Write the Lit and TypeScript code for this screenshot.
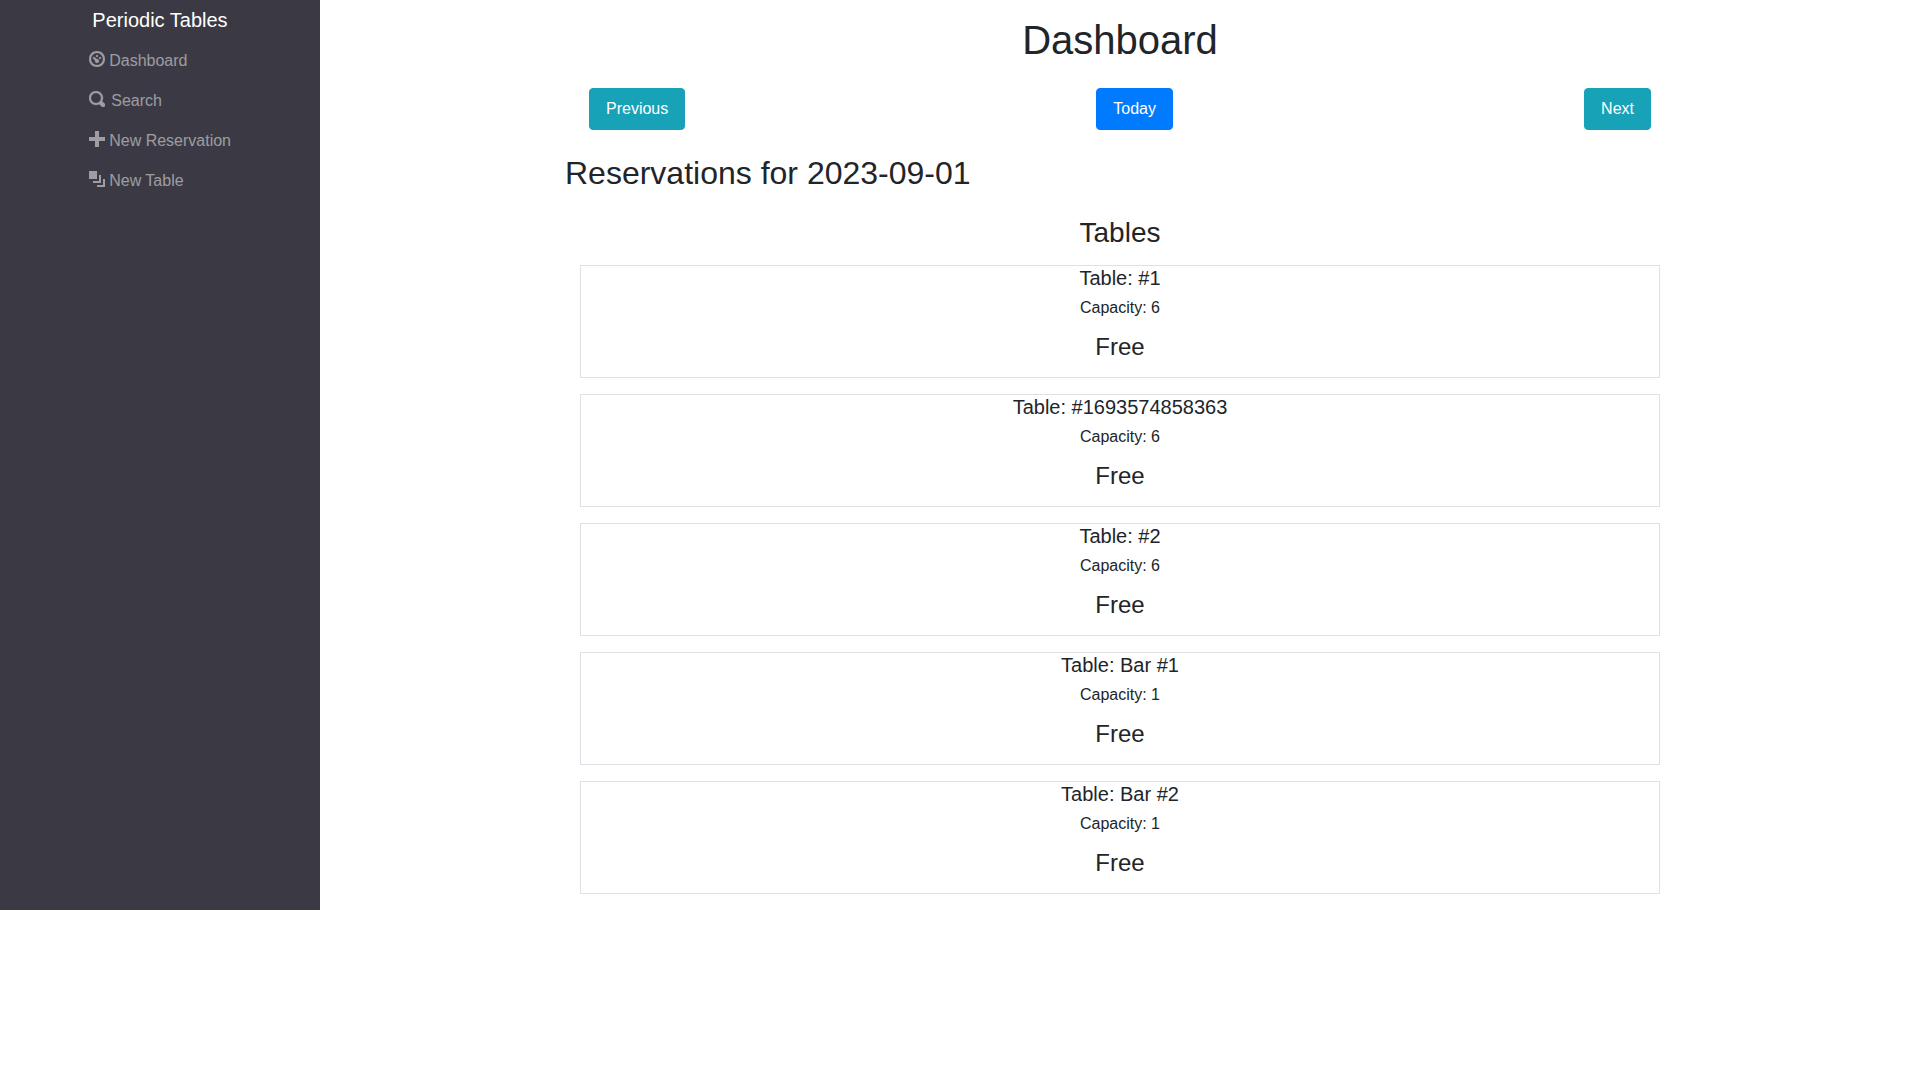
import { LitElement, html, css, svg } from "lit";
import { customElement } from "lit/decorators.js";

const ICONS: Record<string, string> = {
  dashboard:
    "M4 0c-2.2 0-4 1.8-4 4s1.8 4 4 4 4-1.8 4-4-1.8-4-4-4zm0 1c1.66 0 3 1.34 3 3s-1.34 3-3 3-3-1.34-3-3 1.34-3 3-3zm0 1c-.28 0-.5.22-.5.5s.22.5.5.5.5-.22.5-.5-.22-.5-.5-.5zm-1.66 1a.5.5 0 0 0-.19.84l.91.91c-.02.08-.06.16-.06.25 0 .55.45 1 1 1s1-.45 1-1-.45-1-1-1c-.09 0-.17.04-.25.06l-.91-.91a.5.5 0 0 0-.44-.16.5.5 0 0 0-.06 0zm3.16 0c-.28 0-.5.22-.5.5s.22.5.5.5.5-.22.5-.5-.22-.5-.5-.5z",
  search:
    "M3.5 0c-1.93 0-3.5 1.57-3.5 3.5s1.57 3.5 3.5 3.5c.59 0 1.17-.14 1.66-.41a1 1 0 0 0 .13.13l1 1a1.02 1.02 0 1 0 1.44-1.44l-1-1a1 1 0 0 0-.16-.13c.27-.49.44-1.06.44-1.66 0-1.93-1.55-3.5-3.5-3.5zm0 1c1.39 0 2.5 1.11 2.5 2.5 0 .66-.24 1.27-.66 1.72-.01.01-.02.02-.03.03a1 1 0 0 0-.13.13c-.44.4-1.04.63-1.69.63-1.39 0-2.5-1.11-2.5-2.5s1.11-2.5 2.5-2.5z",
  plus: "M3 0v3h-3v2h3v3h2v-3h3v-2h-3v-3h-2z",
  layers: "M0 0v4h4v-4h-4zm5 2v3h-3v1h4v-4h-1zm2 2v3h-3v1h4v-4h-1z",
};

const NAV = [
  { icon: "dashboard", label: "Dashboard", round: true },
  { icon: "search", label: "Search", wide: true, round: true },
  { icon: "plus", label: "New Reservation" },
  { icon: "layers", label: "New Table" },
];

const TABLES = [
  { name: "#1", capacity: 6 },
  { name: "#1693574858363", capacity: 6 },
  { name: "#2", capacity: 6 },
  { name: "Bar #1", capacity: 1 },
  { name: "Bar #2", capacity: 1 },
];

@customElement("app-root")
export class AppRoot extends LitElement {
  static styles = css`
    :host {
      display: flex;
      align-items: stretch;
      font: 400 16px/1.5 "Liberation Sans", Arial, sans-serif;
      color: #212529;
      background: #fff;
    }
    * {
      box-sizing: border-box;
    }
    h1, h2, h3, h4, h5, h6 {
      margin: 0 0 8px;
      font-weight: 400;
      line-height: 1.2;
    }
    .side {
      width: 320px;
      flex: none;
      display: flex;
      flex-direction: column;
      align-items: center;
      background: #3b3a44;
    }
    .brand {
      padding: 5px 0;
      font-size: 20px;
      line-height: 30px;
      color: #fff;
    }
    .nav {
      display: flex;
      flex-direction: column;
      width: 142px;
      white-space: nowrap;
    }
    .link {
      display: flex;
      gap: 4.2px;
      height: 40px;
      padding-top: 9px;
      color: rgba(255, 255, 255, 0.5);
    }
    .link.wide {
      gap: 6.3px;
    }
    .link svg {
      flex: none;
      width: 16px;
      height: 16px;
      margin-top: 2px;
      fill: currentColor;
    }
    .link.round svg {
      fill: #fff;
      stroke: #fff;
      stroke-width: 0.14;
      opacity: 0.5;
    }
    .main {
      flex: 1;
      padding-top: 16px;
    }
    .container {
      width: 1110px;
      margin: 0 auto;
    }
    .title {
      text-align: center;
      font-size: 40px;
    }
    .buttons {
      display: flex;
      justify-content: space-between;
      padding: 16px 24px 24px;
    }
    .btn {
      border: 1px solid #17a2b8;
      border-radius: 4px;
      padding: 8px 16px;
      font: inherit;
      color: #fff;
      background: #17a2b8;
    }
    .btn.primary {
      background: #007bff;
      border-color: #007bff;
    }
    .date {
      font-size: 32px;
    }
    .tables {
      padding: 16px 15px 0;
      text-align: center;
    }
    .heading {
      font-size: 28px;
      margin-bottom: 15px;
    }
    .card {
      height: 113px;
      margin-bottom: 16px;
      border: 1px solid #dee2e6;
    }
    .name {
      font-size: 20px;
    }
    .capacity {
      font-size: 16px;
    }
    .status {
      font-size: 24px;
      margin-top: 16px;
    }
  `;

  render() {
    return html`
      <nav class="side">
        <div class="brand">Periodic Tables</div>
        <div class="nav">
          ${NAV.map(
            (n) => html`<a class="link ${n.wide ? "wide" : ""} ${n.round ? "round" : ""}"
              ><svg viewBox="0 0 8 8">${svg`<path d=${ICONS[n.icon]} />`}</svg><span>${n.label}</span></a
            >`
          )}
        </div>
      </nav>
      <main class="main">
        <div class="container">
          <h1 class="title">Dashboard</h1>
          <div class="buttons">
            <button class="btn">Previous</button>
            <button class="btn primary">Today</button>
            <button class="btn">Next</button>
          </div>
          <h2 class="date">Reservations for 2023-09-01</h2>
          <section class="tables">
            <h3 class="heading">Tables</h3>
            ${TABLES.map(
              (t) => html`<div class="card">
                <h5 class="name">Table: ${t.name}</h5>
                <h6 class="capacity">Capacity: ${t.capacity}</h6>
                <h4 class="status">Free</h4>
              </div>`
            )}
          </section>
        </div>
      </main>
    `;
  }
}
